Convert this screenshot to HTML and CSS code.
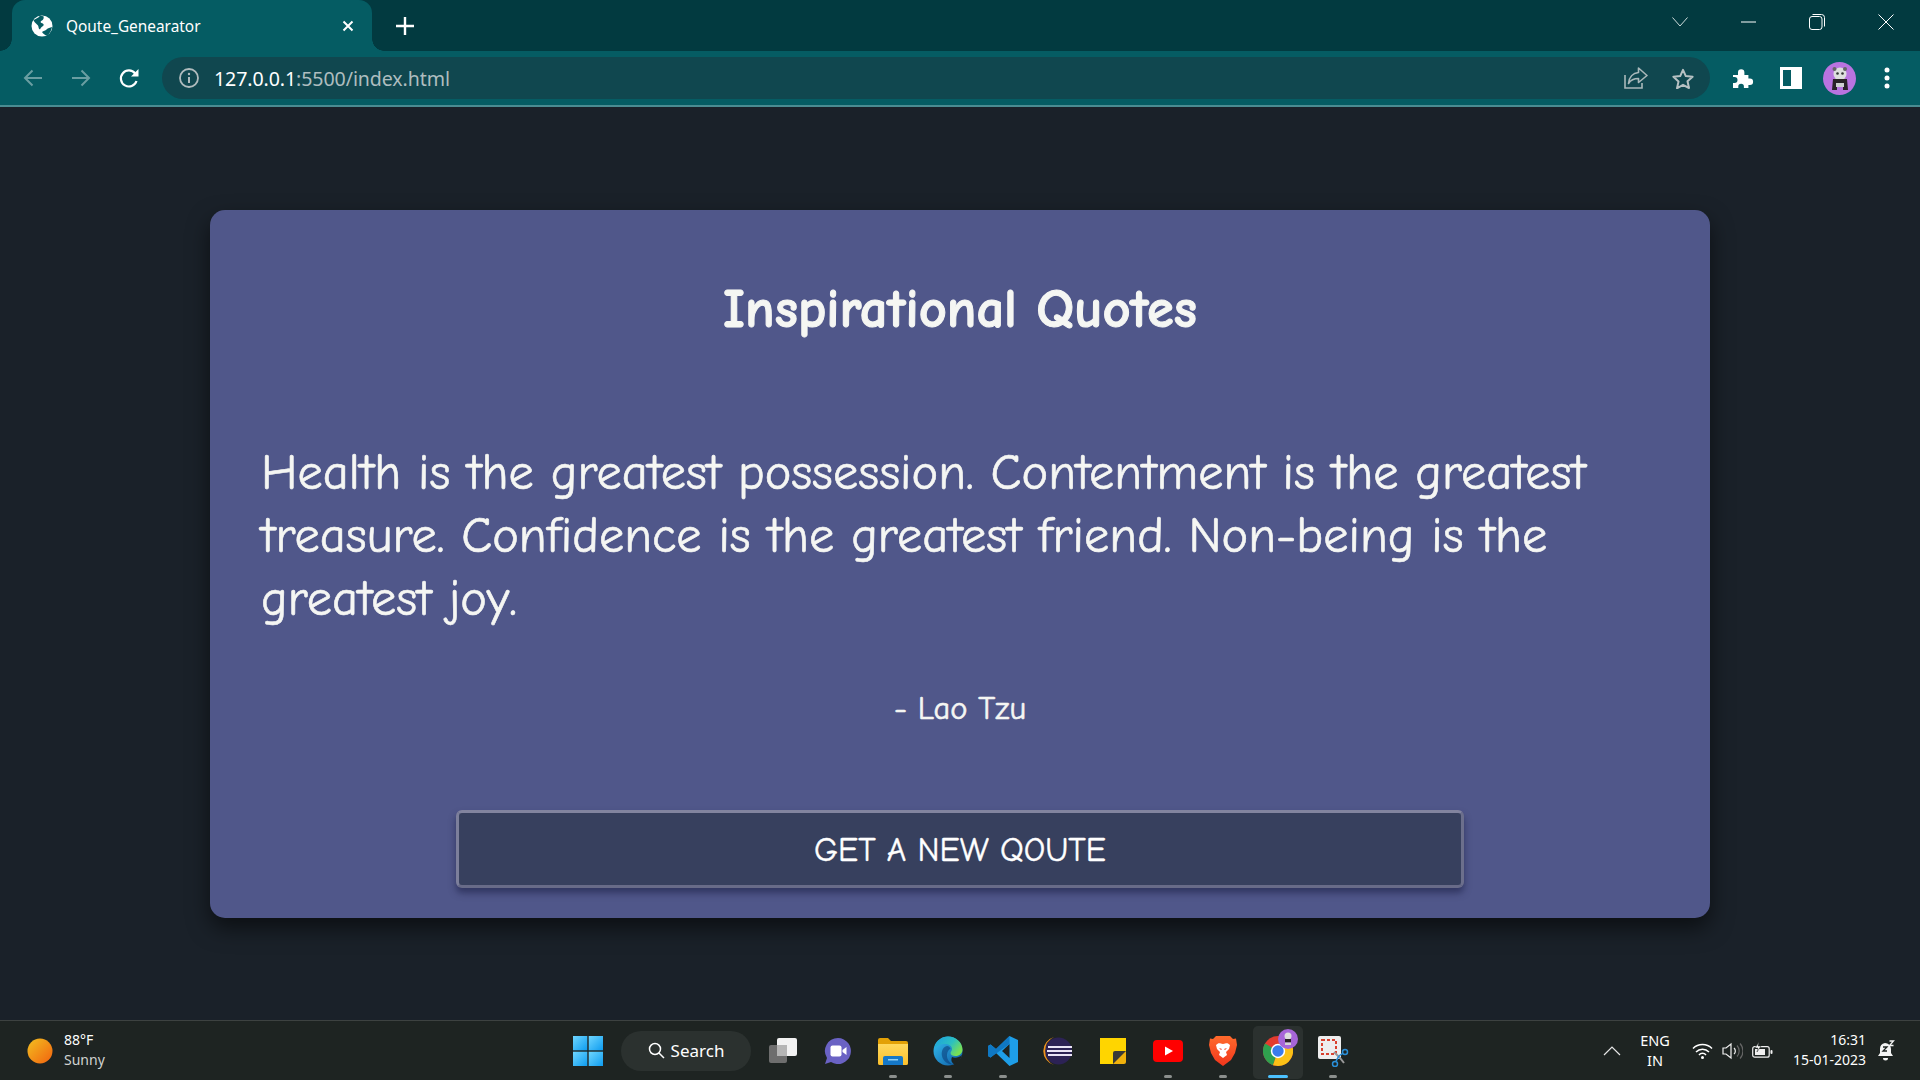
FILE: index.html
```html
<!DOCTYPE html>
<html lang="en">
<head>
<meta charset="utf-8">
<title>Qoute_Genearator</title>
<link rel="stylesheet" href="styles.css">
</head>
<body>
<svg class="defs" width="0" height="0" aria-hidden="true">
  <defs>
    <linearGradient id="sun" x1="0" y1="0" x2="1" y2="1"><stop offset="0" stop-color="#f2c020"/><stop offset="1" stop-color="#f2620f"/></linearGradient>
    <linearGradient id="win" x1="0" y1="0" x2="1" y2="1"><stop offset="0" stop-color="#6fd6ff"/><stop offset="1" stop-color="#0e9cf0"/></linearGradient>
    <linearGradient id="folder" x1="0" y1="0" x2="0" y2="1"><stop offset="0" stop-color="#ffd85c"/><stop offset="1" stop-color="#fbc02d"/></linearGradient>
    <linearGradient id="edge" x1="0" y1="0" x2="1" y2="1"><stop offset="0" stop-color="#35c1f1"/><stop offset="1" stop-color="#0c59a4"/></linearGradient>
    <linearGradient id="edge2" x1="0" y1="0" x2="1" y2=".6"><stop offset="0" stop-color="#1b9de2"/><stop offset=".6" stop-color="#2cc0c0"/><stop offset="1" stop-color="#7ae052"/></linearGradient>
    <linearGradient id="brave" x1="0" y1="0" x2="0" y2="1"><stop offset="0" stop-color="#ff6a2c"/><stop offset="1" stop-color="#f1361d"/></linearGradient>
  </defs>
</svg>

<header class="browser">
  <div class="tabstrip">
    <div class="tab">
      <svg class="ico-globe" viewBox="0 0 22 22"><circle cx="11" cy="11" r="10.500" fill="#fff"/><path d="M9 .8C7.500 3 4.500 4 2.500 5 3.500 8 6 9 7 10.500c1 1.600 0 3 2 4 .5-1.500 1.500-2.500 3-3.500 1.500-1 .5-2.500-1.500-3-1.500-.5-1-2 .5-2.500 1.500-.5 2-2.500 1.500-4.200Z" fill="#055c63"/><path d="M21 12c-2 .5-4 1-5.500 2.500-1 1-3 1.500-4.500 2.500 1 1.500 3 3.500 5 3.500 2.500-1.500 4.500-5 5-8.500Z" fill="#055c63"/></svg>
      <span class="tab-title">Qoute_Genearator</span>
      <svg class="ico-x" viewBox="0 0 12 12"><path d="M1.500 1.500l9 9m0-9l-9 9" stroke="#fff" stroke-width="2" fill="none"/></svg>
    </div>
    <svg class="ico-plus" viewBox="0 0 18 18"><path d="M9 0v18M0 9h18" stroke="#fff" stroke-width="2.400" fill="none"/></svg>
    <div class="win-controls">
      <span class="win-btn"><svg width="16" height="10" viewBox="0 0 16 10"><path d="M.5 .5L8 9l7.500-8.500" stroke="#cfdcdc" fill="none"/></svg></span>
      <span class="win-btn"><svg width="16" height="2" viewBox="0 0 16 2"><path d="M0 1h15" stroke="#fff" fill="none"/></svg></span>
      <span class="win-btn"><svg width="16" height="16" viewBox="0 0 16 16"><rect x=".5" y="2.500" width="12.500" height="13" rx="2.500" stroke="#fff" fill="none"/><path d="M3.500 .5H12.500a3 3 0 0 1 3 3v9" stroke="#fff" fill="none"/></svg></span>
      <span class="win-btn"><svg width="16" height="16" viewBox="0 0 16 16"><path d="M.5 .5l15 15m0-15l-15 15" stroke="#fff" fill="none"/></svg></span>
    </div>
  </div>
  <div class="toolbar">
    <span class="tool"><svg width="20" height="18" viewBox="0 0 20 18"><path d="M19 9H2M9.500 1.500L2 9l7.500 7.500" stroke="#6a9ea2" stroke-width="2" fill="none"/></svg></span>
    <span class="tool"><svg width="20" height="18" viewBox="0 0 20 18"><path d="M1 9h17M10.500 1.500L18 9l-7.500 7.500" stroke="#6a9ea2" stroke-width="2" fill="none"/></svg></span>
    <span class="tool"><svg width="21" height="21" viewBox="0 0 21 21"><path d="M17.500 13a8 8 0 1 1-1.300-7.500" stroke="#fff" stroke-width="2.200" fill="none"/><path d="M19.500 1v7.500H12Z" fill="#fff"/></svg></span>
    <div class="omnibox">
      <svg class="ico-info" width="20" height="20" viewBox="0 0 20 20"><circle cx="10" cy="10" r="9" stroke="#b0bcbe" stroke-width="1.800" fill="none"/><path d="M10 9v6" stroke="#b0bcbe" stroke-width="2"/><circle cx="10" cy="6" r="1.200" fill="#b0bcbe"/></svg>
      <span class="url"><span class="host">127.0.0.1</span><span class="path">:5500/index.html</span></span>
      <span class="omni-end">
        <svg width="24" height="22" viewBox="0 0 24 22"><path d="M1 8v13h17v-5" stroke="#a9b8ba" stroke-width="1.600" fill="none"/><path d="M14.500 1L23 8.500l-8.500 7V11.500c-4.500 0-7.500 1-10 5C5 10 9 6 14.500 5.500Z" stroke="#a9b8ba" stroke-width="1.600" stroke-linejoin="round" fill="none"/></svg>
        <svg width="22" height="21" viewBox="0 0 22 21"><path d="M11 1.800l2.800 6.300 6.800.7-5.100 4.500 1.500 6.700L11 16.800l-6 3.500 1.500-6.700L1.400 8.800l6.800-.7Z" stroke="#b7c1c3" stroke-width="2" stroke-linejoin="round" fill="none"/></svg>
      </span>
    </div>
    <div class="tools-right">
      <span class="tool"><svg width="22" height="22" viewBox="0 0 22 22"><path d="M1 8h5V5.500a3.200 3.200 0 0 1 6.400 0V8h4v3.500h1.500a3.200 3.200 0 0 1 0 6.400H16.400V21h-4.500v-1.500a2.800 2.800 0 0 0-5.600 0V21H1v-5h1.500a3 3 0 0 0 0-6H1Z" fill="#fff"/></svg></span>
      <span class="tool"><svg width="22" height="22" viewBox="0 0 22 22"><path fill-rule="evenodd" d="M0 0h22v22H0ZM3 3v16h8V3Z" fill="#fff"/></svg></span>
      <span class="tool"><svg width="33" height="33" viewBox="0 0 33 33"><circle cx="16.500" cy="16.500" r="16.500" fill="#b973e0"/><circle cx="17" cy="12" r="6.500" fill="#dedede"/><circle cx="11.500" cy="7" r="2" fill="#666"/><circle cx="22" cy="7" r="2" fill="#666"/><circle cx="14.500" cy="11.500" r="1.300" fill="#333"/><circle cx="19.500" cy="11.500" r="1.300" fill="#333"/><path d="M10 17h14l1 11h-5v-5h-6v5H9Z" fill="#2a2226"/><rect x="13" y="21" width="8" height="4" fill="#cfcfcf"/></svg></span>
      <span class="tool"><svg width="6" height="22" viewBox="0 0 6 22"><circle cx="3" cy="3" r="2.500" fill="#fff"/><circle cx="3" cy="11" r="2.500" fill="#fff"/><circle cx="3" cy="19" r="2.500" fill="#fff"/></svg></span>
    </div>
  </div>
</header>

<main class="page">
  <section class="card">
    <h1 class="card-title">Inspirational Quotes</h1>
    <p class="quote">Health is the greatest possession. Contentment is the greatest treasure. Confidence is the greatest friend. Non-being is the greatest joy.</p>
    <p class="author">- Lao Tzu</p>
    <button class="new-quote" type="button">GET A NEW QOUTE</button>
  </section>
</main>

<footer class="taskbar">
  <div class="weather">
    <svg width="26" height="26" viewBox="0 0 26 26"><circle cx="13" cy="13" r="12.500" fill="url(#sun)"/></svg>
    <div class="weather-text"><span class="temp">88°F</span><span class="cond">Sunny</span></div>
  </div>
  <div class="apps">
    <svg class="app-win" width="30" height="30" viewBox="0 0 30 30"><g fill="url(#win)"><rect width="14.300" height="14.300"/><rect x="15.700" width="14.300" height="14.300"/><rect y="15.700" width="14.300" height="14.300"/><rect x="15.700" y="15.700" width="14.300" height="14.300"/></g></svg>
    <div class="search"><svg width="17" height="17" viewBox="0 0 17 17"><circle cx="7" cy="7" r="5.500" stroke="#fff" stroke-width="1.500" fill="none"/><path d="M11 11l5 5" stroke="#fff" stroke-width="1.500"/></svg><span>Search</span></div>
    <span class="app"><svg width="30" height="30" viewBox="0 0 30 30"><rect x="1" y="9" width="18" height="18" rx="2" fill="#6e6e6e"/><rect x="9" y="2" width="20" height="18" rx="2" fill="#f2f2f2"/><rect x="9" y="9" width="10" height="11" fill="#b5b5b5"/></svg></span>
    <span class="app"><svg width="30" height="30" viewBox="0 0 30 30"><path d="M15 2a13 13 0 1 1-7 24l-6 2 2-6A13 13 0 0 1 15 2Z" fill="#6a62c4"/><rect x="7.500" y="9.500" width="11" height="11" rx="2" fill="#fff"/><path d="M19.500 14l4-3v8l-4-3Z" fill="#fff"/></svg></span>
    <span class="app run"><svg width="30" height="28" viewBox="0 0 30 28"><path d="M0 3a2 2 0 0 1 2-2h8l3 3h15a2 2 0 0 1 2 2v20a2 2 0 0 1-2 2H2a2 2 0 0 1-2-2Z" fill="#e3a106"/><path d="M0 7h30v19a2 2 0 0 1-2 2H2a2 2 0 0 1-2-2Z" fill="url(#folder)"/><path d="M5 21a2 2 0 0 1 2-2h16a2 2 0 0 1 2 2v7H5Z" fill="#1578c8"/><rect x="10" y="22" width="10" height="1.500" fill="#8fd0f5"/></svg></span>
    <span class="app run"><svg width="30" height="30" viewBox="0 0 30 30"><circle cx="15" cy="15" r="14.500" fill="url(#edge)"/><path d="M1 13C3 4 10 .5 15 .5c8 0 14.500 6 14.500 13 0 4-3 6.500-7 6.500-3 0-5-1-5-3 0-1.500 1.500-2 1.500-4 0-3-3.500-5-7-5C7 8 3 10 1 13Z" fill="url(#edge2)"/><path d="M14 10c-4 1-6 5-5 10s6 9 11 8.500c-4-2-6.500-6-6-10 .2-3 2-5 3.500-6-1-1.500-2-2.700-3.500-2.500Z" fill="#0b3f7c" opacity=".6"/><path d="M19 21c3 1.500 7 .5 10-2-1 4-3.500 7.500-7 9.500-3-1-4.500-4-3-7.500Z" fill="#1e2422"/></svg></span>
    <span class="app run"><svg width="30" height="30" viewBox="0 0 30 30"><path d="M21.500 0L30 4v22l-8.500 4L8 17l-5.500 4.500L0 20v-10l2.500-1.500L8 13ZM21.500 8l-7.500 7 7.500 7Z" fill="#1e9ee8"/><path d="M21.500 0L8 13 2.500 8.500 0 10v10l2.500 1.500L21.500 8Z" fill="#0f78c4"/></svg></span>
    <span class="app"><svg width="30" height="30" viewBox="0 0 30 30"><circle cx="15.500" cy="15" r="13.500" fill="#2c2255"/><path d="M11 1A14.500 14.500 0 0 0 11 29 15.500 15.500 0 0 1 11 1Z" fill="#f0941e"/><g fill="#e9e4f5"><rect x="5" y="10" width="24" height="2"/><rect x="4" y="14" width="25" height="2"/><rect x="5" y="18" width="24" height="2"/></g></svg></span>
    <span class="app"><svg width="28" height="28" viewBox="0 0 28 28"><path d="M1 1h26v16L17 27H1Z" fill="#ffd500"/><path d="M14 27V16a2 2 0 0 1 2-2h11v3L17 27Z" fill="#3a3a36"/><path d="M14 27l13-13v11a2 2 0 0 1-2 2Z" fill="#efb00c"/></svg></span>
    <span class="app run"><svg width="30" height="22" viewBox="0 0 30 22"><rect width="30" height="22" rx="4" fill="#f00"/><path d="M12 6.500v9l8-4.500Z" fill="#fff"/></svg></span>
    <span class="app run"><svg width="28" height="32" viewBox="0 0 28 32"><path d="M7 1h14l3 3 3-.5L28 10l-2 8-4 7-8 6-8-6-4-7-2-8 1-6.500L4 4Z" fill="url(#brave)"/><path d="M14 9c-2 0-3-1-5-.5L7 10l1 4 3 3-1 3 4 3 4-3-1-3 3-3 1-4-2-1.500C17 8 16 9 14 9Z" fill="#fff"/><path d="M10 13l3 1-1 1Zm8 0l-3 1 1 1Z" fill="#f1361d"/></svg></span>
    <span class="app active"><svg class="chrome" width="30" height="30" viewBox="0 0 30 30"><circle cx="15" cy="15" r="15" fill="#e33b2e"/><path d="M15 15L2 7.500A15 15 0 0 0 10 29.200Z" fill="#2fa04e"/><path d="M15 15l13-7.500A15 15 0 0 1 15 30l-5-.8Z" fill="#fbc116"/><circle cx="15" cy="15" r="7.200" fill="#fff"/><circle cx="15" cy="15" r="5.700" fill="#3a7cec"/></svg><svg class="chrome-badge" width="20" height="20" viewBox="0 0 20 20"><circle cx="10" cy="10" r="10" fill="#a765d8"/><circle cx="10" cy="7" r="3.500" fill="#ddd"/><rect x="7" y="10" width="6" height="3.500" fill="#2a2226"/><rect x="7" y="13.500" width="6" height="2.500" fill="#d4d4d4"/></svg></span>
    <span class="app run"><svg width="32" height="32" viewBox="0 0 32 32"><rect x="1" y="1" width="23" height="23" rx="2" fill="#eee"/><rect x="5" y="5" width="14" height="14" stroke="#d9412f" stroke-width="2" stroke-dasharray="3 2" fill="none"/><path d="M17 17l6 6 4 5" stroke="#9a9a9a" stroke-width="2" fill="none"/><circle cx="28" cy="17" r="2.500" stroke="#2a8fd8" stroke-width="1.500" fill="none"/><circle cx="18" cy="29" r="2.500" stroke="#2a8fd8" stroke-width="1.500" fill="none"/><path d="M19 26l3-5 4-3" stroke="#2a8fd8" stroke-width="1.500" fill="none"/></svg></span>
  </div>
  <div class="tray">
    <svg class="caret" width="18" height="10" viewBox="0 0 18 10"><path d="M1 9l8-8 8 8" stroke="#e6e6e6" stroke-width="1.200" fill="none"/></svg>
    <div class="lang"><span>ENG</span><span>IN</span></div>
    <svg class="t-wifi" width="21" height="16" viewBox="0 0 21 16"><path d="M1 5.500a13.500 13.500 0 0 1 19 0M4 9a9 9 0 0 1 13 0M7 12a4.500 4.500 0 0 1 7 0" stroke="#fff" stroke-width="1.500" fill="none"/><circle cx="10.500" cy="14.500" r="1.500" fill="#fff"/></svg>
    <svg class="t-vol" width="21" height="18" viewBox="0 0 21 18"><path d="M1 6h3l5-4v14l-5-4H1Z" stroke="#f0f0f0" stroke-width="1.200" fill="none"/><path d="M12 6a4 4 0 0 1 0 6" stroke="#f0f0f0" stroke-width="1.200" fill="none"/><path d="M15 3.500a8 8 0 0 1 0 11M18 1.500a11 11 0 0 1 0 15" stroke="#666" stroke-width="1.200" fill="none"/></svg>
    <svg class="t-bat" width="21" height="17" viewBox="0 0 21 17"><rect x=".7" y="4.700" width="16.500" height="10.500" rx="2" stroke="#f0f0f0" stroke-width="1.200" fill="none"/><rect x="3" y="7" width="10" height="6" fill="#f0f0f0"/><rect x="18.500" y="8" width="2" height="4" rx="1" fill="#f0f0f0"/><path d="M7 0L3 6h3l-1 4 4-6H6Z" fill="#fff" stroke="#1e2422" stroke-width=".5"/></svg>
    <div class="clock"><span>16:31</span><span>15-01-2023</span></div>
    <svg class="t-bell" width="18" height="22" viewBox="0 0 18 22"><path d="M8 3a6 6 0 0 0-5 6v4l-2 3h15l-2-3V9a6 6 0 0 0-6-6Z" fill="#f4f4f4"/><path d="M6 18h5a2.500 2.500 0 0 1-5 0Z" fill="#f4f4f4"/><path d="M6 7h4l-4 4h4" stroke="#1e2422" stroke-width="1.300" fill="none"/><path d="M12.500 1h4l-4 4.500h4" stroke="#f4f4f4" stroke-width="1.300" fill="none"/></svg>
  </div>
</footer>
</body>
</html>
```
FILE: styles.css
```css
* { box-sizing: border-box; }
html, body { height: 100%; }
body {
  margin: 0;
  height: 100vh;
  display: flex;
  flex-direction: column;
  overflow: hidden;
  background: #1a2129;
  font-family: "Noto Sans", "Open Sans", sans-serif;
  color: #fff;
}
.defs { position: absolute; }

/* Browser chrome */
.browser { flex: none; }
.tabstrip {
  height: 51px;
  background: #023a40;
  display: flex;
  align-items: center;
  padding-left: 12px;
}
.tab {
  position: relative;
  width: 360px;
  height: 51px;
  background: #055c63;
  border-radius: 13px 13px 0 0;
  display: flex;
  align-items: center;
  padding: 0 17px 0 19px;
}
.tab::before, .tab::after {
  content: "";
  position: absolute;
  bottom: 0;
  width: 12px;
  height: 12px;
}
.tab::before { left: -12px; background: radial-gradient(circle at 0 0, transparent 11.500px, #055c63 12px); }
.tab::after { right: -12px; background: radial-gradient(circle at 100% 0, transparent 11.500px, #055c63 12px); }
.ico-globe { width: 22px; height: 22px; flex: none; }
.tab-title { margin-left: 13px; flex: 1; font-size: 15.400px; white-space: nowrap; padding-top: 1px; }
.ico-x { width: 12px; height: 12px; flex: none; margin-right: 1px; }
.ico-plus { width: 18px; height: 18px; margin-left: 24px; flex: none; }
.win-controls { margin-left: auto; display: flex; align-items: center; height: 100%; }
.win-btn { width: 68.500px; height: 100%; display: flex; align-items: center; justify-content: center; padding-bottom: 8px; }

.toolbar {
  height: 56px;
  background: #055c63;
  border-bottom: 2px solid #4a8c92;
  display: flex;
  align-items: center;
  padding: 0 9px;
}
.tool { width: 48px; height: 42px; display: flex; align-items: center; justify-content: center; flex: none; }
.omnibox {
  flex: 1;
  height: 42px;
  margin: 0 9px;
  border-radius: 21px;
  background: #10474f;
  display: flex;
  align-items: center;
  padding: 0 16px 0 17px;
}
.url { margin-left: 15px; font-size: 19.600px; white-space: nowrap; letter-spacing: -.1px; }
.host { color: #fff; }
.path { color: #aebdbf; }
.omni-end { margin-left: auto; display: flex; align-items: center; gap: 24px; }
.tools-right { display: flex; align-items: center; }

/* Page */
.page {
  flex: 1;
  min-height: 0;
  display: flex;
  align-items: center;
  justify-content: center;
}
.card {
  width: 1500px;
  height: 708px;
  background: #50578a;
  border-radius: 15px;
  padding: 70px 50px 30px;
  box-shadow: 0 10px 22px rgba(0, 0, 0, .55);
  display: flex;
  flex-direction: column;
  font-family: "Comic Sans MS", "Comic Neue", cursive;
  color: #f5f6f3;
  -webkit-text-stroke: .6px #f5f6f3;
}
.card-title {
  margin: 0;
  height: 60px;
  line-height: 60px;
  font-size: 54.500px;
  font-weight: 700;
  text-align: center;
  -webkit-text-stroke: 1px #f5f6f3;
}
.quote {
  margin: 102px 0 0;
  padding-left: 1px;
  font-size: 50.400px;
  line-height: 63px;
}
.author {
  margin: 58px 0 0;
  font-size: 32.500px;
  line-height: 40px;
  text-align: center;
}
.new-quote {
  align-self: center;
  margin-top: 81px;
  width: 1008px;
  height: 78px;
  padding: 2px 0 0;
  background: #37405e;
  border: 3px solid;
  border-color: #82849f #6c6f8c #686b88 #7c7f9b;
  border-radius: 6px;
  box-shadow: 0 5px 7px rgba(35, 40, 80, .7);
  color: #fff;
  font: inherit;
  font-size: 33.500px;
  -webkit-text-stroke: .4px #fff;
}

/* Taskbar */
.taskbar {
  flex: none;
  height: 60px;
  background: #1e2422;
  border-top: 1px solid #3d4241;
  display: flex;
  align-items: center;
}
.weather { width: 573px; flex: none; display: flex; align-items: center; padding-left: 27px; }
.weather-text { margin-left: 11px; display: flex; flex-direction: column; font-size: 14px; line-height: 20px; padding-bottom: 1px; }
.cond { color: #d0d2d0; }
.apps { display: flex; align-items: center; height: 100%; }
.app-win { flex: none; }
.search {
  width: 130px;
  height: 40px;
  margin-left: 18px;
  margin-right: 4px;
  border-radius: 20px;
  background: #2b312f;
  display: flex;
  align-items: center;
  justify-content: center;
  gap: 6px;
  font-size: 17px;
}
.app {
  position: relative;
  width: 55px;
  height: 60px;
  flex: none;
  display: flex;
  align-items: center;
  justify-content: center;
}
.app.run::after, .app.active::after {
  content: "";
  position: absolute;
  bottom: 3px;
  left: 50%;
  width: 8px;
  height: 3px;
  margin-left: -4px;
  border-radius: 2px;
  background: #8b8f8d;
}
.app.active::before {
  content: "";
  position: absolute;
  left: 3px;
  right: 2px;
  top: 5px;
  bottom: 2px;
  background: #2b312f;
  border-radius: 5px;
}
.app.active::after { width: 20px; margin-left: -10px; background: #4cc2ff; }
.chrome { position: relative; }
.chrome-badge { position: absolute; top: 8px; left: 28px; }
.tray { flex: 1; display: flex; align-items: center; height: 100%; min-width: 0; }
.caret { margin-left: 243px; flex: none; }
.lang { width: 50px; margin-left: 9px; padding-bottom: 2px; display: flex; flex-direction: column; align-items: center; font-size: 14.500px; line-height: 20px; }
.t-wifi { margin-left: 12px; flex: none; }
.t-vol { margin-left: 9px; flex: none; }
.t-bat { margin-left: 9px; flex: none; }
.clock { width: 93px; padding-bottom: 2px; display: flex; flex-direction: column; align-items: flex-end; font-size: 14px; line-height: 20px; }
.t-bell { margin-left: 11px; flex: none; }
```
